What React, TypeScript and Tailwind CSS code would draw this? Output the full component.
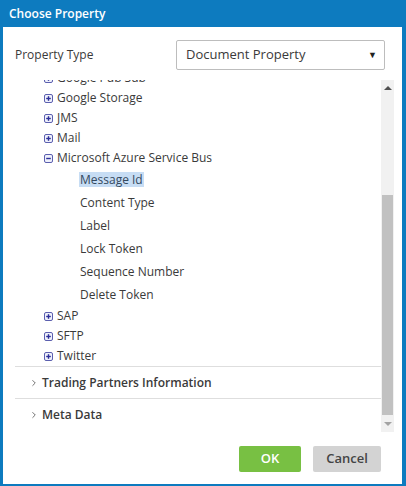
import { ChevronRight } from "lucide-react"

const FONT = { fontFamily: '"Open Sans", "Liberation Sans", sans-serif' }

const BEFORE = ["Google Pub Sub", "Google Storage", "JMS", "Mail"]
const AZURE_FIELDS = ["Message Id", "Content Type", "Label", "Lock Token", "Sequence Number", "Delete Token"]
const AFTER = ["SAP", "SFTP", "Twitter"]

function ToggleIcon({ open }: { open?: boolean }) {
  return (
    <svg width="9" height="9" viewBox="0 0 9 9" className="shrink-0">
      <rect x="0.5" y="0.5" width="8" height="8" rx="1.5" fill="#eef0fb" stroke="#5b5fae" />
      <path d="M2.2 4.5h4.6" stroke="#2d2f9a" strokeWidth="1.4" />
      {!open && <path d="M4.5 2.2v4.6" stroke="#2d2f9a" strokeWidth="1.4" />}
    </svg>
  )
}

function TreeNode({ label, open }: { label: string; open?: boolean }) {
  return (
    <div className="flex h-[20px] items-center gap-[4px] pl-[29px] text-[12px] text-[#3a3a3a]">
      <ToggleIcon open={open} />
      <span>{label}</span>
    </div>
  )
}

function Section({ label }: { label: string }) {
  return (
    <div className="flex h-[32px] items-center border-t border-[#dedede] pl-[14px] text-[12px] font-semibold text-[#3a3a3a]">
      <ChevronRight className="size-[10px] text-[#666]" strokeWidth={2.2} />
      <span className="ml-[3px]">{label}</span>
    </div>
  )
}

function Scrollbar() {
  return (
    <div className="flex w-[13px] shrink-0 flex-col bg-[#f1f1f1]">
      <div className="flex h-[15px] items-center justify-center">
        <div className="h-0 w-0 border-x-[4px] border-b-[4px] border-x-transparent border-b-[#505050]" />
      </div>
      <div className="h-[100px]" />
      <div className="mx-[1px] flex-1 bg-[#c1c1c1]" />
      <div className="flex h-[17px] items-center justify-center">
        <div className="h-0 w-0 border-x-[4px] border-t-[4px] border-x-transparent border-t-[#a3a3a3]" />
      </div>
    </div>
  )
}

export default function App() {
  return (
    <div className="flex h-[486px] w-[406px] flex-col bg-[#0d7bbf]" style={FONT}>
      <div className="flex h-[27px] shrink-0 items-center pl-[9px] text-[12px] font-semibold text-white">
        Choose Property
      </div>

      <div className="mb-[2px] ml-[3px] mr-[4px] flex flex-1 flex-col bg-white">
        <div className="flex items-center pl-[12px] pr-[17px] pt-[13px]">
          <span className="text-[12px] text-[#3a3a3a]">Property Type</span>
          <div className="ml-auto flex h-[30px] w-[209px] items-center justify-between rounded-[2px] border border-[#bdbdbd] pl-[9px] pr-[7px] text-[13px] text-[#3a3a3a]">
            <span>Document Property</span>
            <span className="text-[9px] text-[#222]">▼</span>
          </div>
        </div>

        <div className="mt-[10px] flex h-[352px] pl-[12px] pr-[8px]">
          <div className="flex-1 overflow-hidden">
            <div className="-mt-[12px]">
              {BEFORE.map((l) => (
                <TreeNode key={l} label={l} />
              ))}
              <TreeNode label="Microsoft Azure Service Bus" open />
              {AZURE_FIELDS.map((f, i) => (
                <div key={f} className="flex h-[23px] items-center pl-[64px] text-[12px] text-[#3a3a3a]">
                  <span className={i === 0 ? "bg-[#c7ddf4] px-[1px] leading-[15px] text-[#34495e]" : "px-[1px]"}>{f}</span>
                </div>
              ))}
              {AFTER.map((l) => (
                <TreeNode key={l} label={l} />
              ))}
              <Section label="Trading Partners Information" />
              <Section label="Meta Data" />
            </div>
          </div>
          <Scrollbar />
        </div>

        <div className="mt-[14px] flex justify-end gap-[12px] pr-[21px]">
          <button className="h-[26px] w-[62px] rounded-[2px] bg-[#78c043] text-[13px] font-semibold text-white">
            OK
          </button>
          <button className="h-[26px] w-[68px] rounded-[2px] bg-[#d3d3d3] text-[13px] font-semibold text-[#444]">
            Cancel
          </button>
        </div>
      </div>
    </div>
  )
}
